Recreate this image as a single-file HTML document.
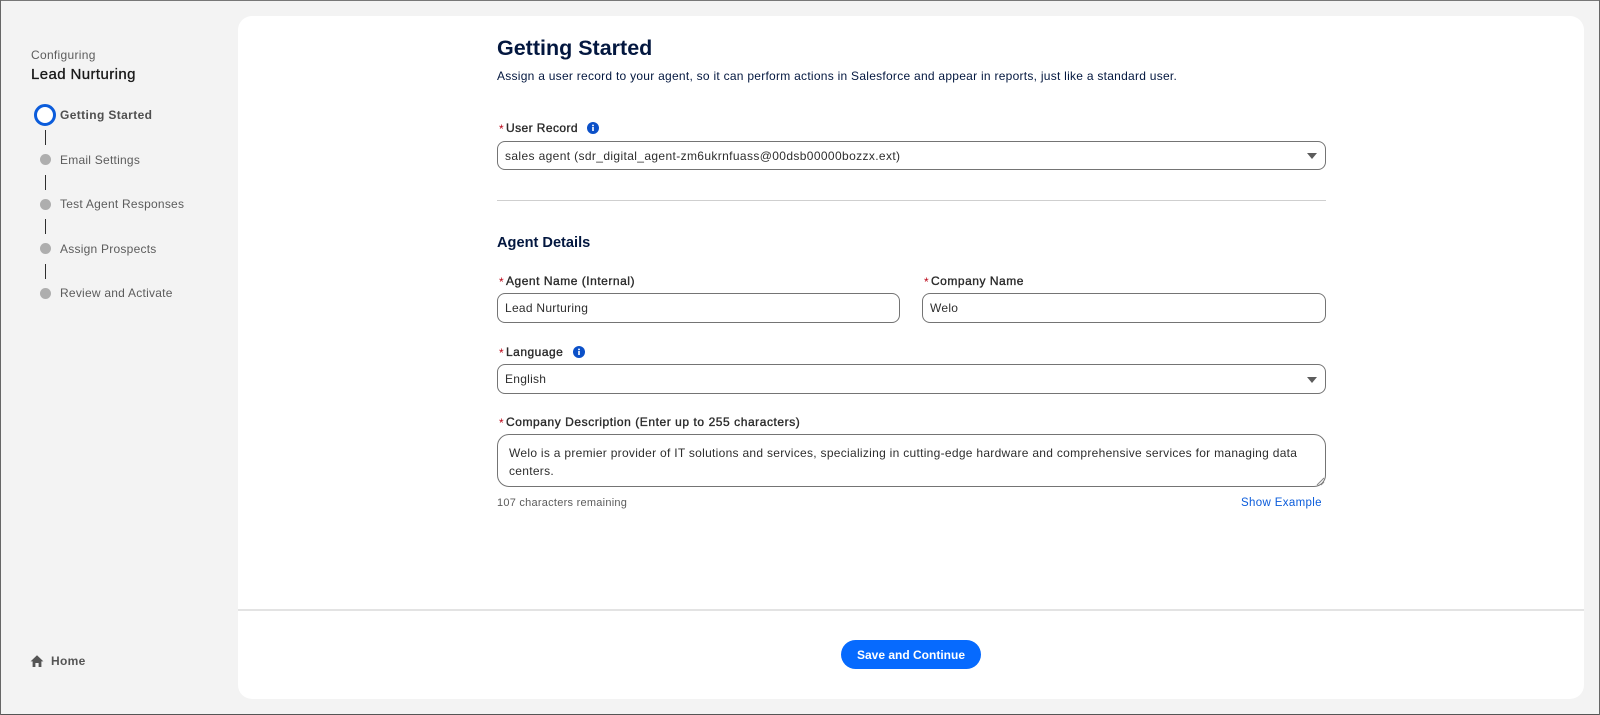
<!DOCTYPE html>
<html>
<head>
<meta charset="utf-8">
<style>
html,body{margin:0;padding:0;}
body{width:1600px;height:715px;position:relative;overflow:hidden;background:#f3f3f3;font-family:"Liberation Sans",Arial,sans-serif;}
.t{position:absolute;white-space:nowrap;line-height:16px;}
.b{position:absolute;}
.box{position:absolute;box-sizing:border-box;border:1px solid #747474;border-radius:8px;background:#fff;}
.lab{font-size:12px;color:#2a2a2a;font-weight:400;-webkit-text-stroke:.35px #2a2a2a;letter-spacing:.52px;}
.star{color:#ba0517;font-size:12px;}
.val{font-size:12px;color:#2e2e2e;letter-spacing:.27px;}
.nav{font-size:12px;color:#5c5c5c;letter-spacing:.24px;}
.dot{position:absolute;left:40px;width:11px;height:11px;border-radius:50%;background:#aeaeae;}
.ln{position:absolute;left:44.5px;width:1.5px;height:15px;background:#2e2e2e;}
.arr{position:absolute;width:0;height:0;border-left:5px solid transparent;border-right:5px solid transparent;border-top:6px solid #5c5c5c;}
</style>
</head>
<body>
<div class="b" style="left:0;top:0;width:1600px;height:1px;background:#777;"></div>
<div class="b" style="left:0;top:714px;width:1600px;height:1px;background:#555;"></div>
<div class="b" style="left:0;top:0;width:1px;height:715px;background:#666;"></div>
<div class="b" style="left:1599px;top:0;width:1px;height:715px;background:#666;"></div>

<div class="t" style="left:31px;top:47px;font-size:12px;color:#5c5c5c;letter-spacing:.3px;">Configuring</div>
<div class="t" style="left:31px;top:66px;font-size:15px;line-height:18px;color:#181818;letter-spacing:.4px;-webkit-text-stroke:.3px #181818;">Lead Nurturing</div>

<div class="b" style="left:34px;top:104px;box-sizing:border-box;width:22px;height:22px;border:3px solid #0b5cdb;border-radius:50%;background:#fff;"></div>
<div class="t nav" style="left:60px;top:107px;font-weight:700;color:#4f4f4f;letter-spacing:.38px;">Getting Started</div>
<div class="ln" style="top:130px;"></div>
<div class="dot" style="top:154px;"></div>
<div class="t nav" style="left:60px;top:152px;">Email Settings</div>
<div class="ln" style="top:175px;"></div>
<div class="dot" style="top:199px;"></div>
<div class="t nav" style="left:60px;top:196px;">Test Agent Responses</div>
<div class="ln" style="top:219px;"></div>
<div class="dot" style="top:243px;"></div>
<div class="t nav" style="left:60px;top:241px;">Assign Prospects</div>
<div class="ln" style="top:264px;"></div>
<div class="dot" style="top:288px;"></div>
<div class="t nav" style="left:60px;top:285px;">Review and Activate</div>

<svg class="b" style="left:30px;top:654px;" width="14" height="14" viewBox="0 0 14 14"><path d="M7 1.2 L13.4 7.4 H11.4 V13 H8.6 V9 H5.4 V13 H2.6 V7.4 H.6 Z" fill="#555"/></svg>
<div class="t" style="left:51px;top:653px;font-size:12px;font-weight:700;color:#555;letter-spacing:.3px;">Home</div>

<div class="b" style="left:238px;top:16px;width:1346px;height:683px;background:#fff;border-radius:14px;"></div>
<div class="b" style="left:238px;top:609px;width:1346px;height:2px;background:#e3e3e3;"></div>

<div class="t" style="left:497px;top:34px;font-size:21.5px;line-height:28px;font-weight:700;color:#03173f;">Getting Started</div>
<div class="t" style="left:497px;top:68px;font-size:12px;color:#03173f;letter-spacing:.265px;">Assign a user record to your agent, so it can perform actions in Salesforce and appear in reports, just like a standard user.</div>

<div class="t star" style="left:499px;top:121px;">*</div>
<div class="t lab" style="left:506px;top:120px;letter-spacing:.42px;">User Record</div>
<svg class="b" style="left:587px;top:122px;" width="12" height="12" viewBox="0 0 12 12"><circle cx="6" cy="6" r="6" fill="#0b50c8"/><rect x="5.2" y="5" width="1.6" height="4" fill="#fff"/><circle cx="6" cy="3.4" r=".95" fill="#fff"/></svg>
<div class="box" style="left:497px;top:141px;width:829px;height:29px;"></div>
<div class="t val" style="left:505px;top:148px;letter-spacing:.37px;">sales agent (sdr_digital_agent-zm6ukrnfuass@00dsb00000bozzx.ext)</div>
<div class="arr" style="left:1306.5px;top:153px;"></div>

<div class="b" style="left:497px;top:200px;width:829px;height:1px;background:#cfcfcf;"></div>

<div class="t" style="left:497px;top:234px;font-size:14.6px;line-height:18px;font-weight:700;color:#03173f;">Agent Details</div>

<div class="t star" style="left:499px;top:274px;">*</div>
<div class="t lab" style="left:506px;top:273px;">Agent Name (Internal)</div>
<div class="box" style="left:497px;top:293px;width:403px;height:30px;"></div>
<div class="t val" style="left:505px;top:300px;">Lead Nurturing</div>

<div class="t star" style="left:924px;top:274px;">*</div>
<div class="t lab" style="left:931px;top:273px;">Company Name</div>
<div class="box" style="left:922px;top:293px;width:404px;height:30px;"></div>
<div class="t val" style="left:930px;top:300px;">Welo</div>

<div class="t star" style="left:499px;top:345px;">*</div>
<div class="t lab" style="left:506px;top:344px;letter-spacing:.49px;">Language</div>
<svg class="b" style="left:573px;top:346px;" width="12" height="12" viewBox="0 0 12 12"><circle cx="6" cy="6" r="6" fill="#0b50c8"/><rect x="5.2" y="5" width="1.6" height="4" fill="#fff"/><circle cx="6" cy="3.4" r=".95" fill="#fff"/></svg>
<div class="box" style="left:497px;top:364px;width:829px;height:30px;"></div>
<div class="t val" style="left:505px;top:371px;">English</div>
<div class="arr" style="left:1306.5px;top:377px;"></div>

<div class="t star" style="left:499px;top:415px;">*</div>
<div class="t lab" style="left:506px;top:414px;letter-spacing:.56px;">Company Description (Enter up to 255 characters)</div>
<div class="box" style="left:497px;top:434px;width:829px;height:53px;border-radius:12px;"></div>
<div class="t val" style="left:509px;top:444px;line-height:18px;letter-spacing:.29px;">Welo is a premier provider of IT solutions and services, specializing in cutting-edge hardware and comprehensive services for managing data<br>centers.</div>
<svg class="b" style="left:1316px;top:477px;" width="9" height="9" viewBox="0 0 9 9"><path d="M1 8 L8 1 M5 8 L8 5" stroke="#888" stroke-width="1" fill="none"/></svg>

<div class="t" style="left:497px;top:495px;font-size:11px;color:#5c5c5c;letter-spacing:.25px;">107 characters remaining</div>
<div class="t" style="left:1241px;top:495px;font-size:11.5px;color:#0b5cdb;letter-spacing:.35px;">Show Example</div>

<div class="b" style="left:841px;top:640px;width:140px;height:29px;background:#066afe;border-radius:15px;"></div>
<div class="t" style="left:841px;top:647px;width:140px;text-align:center;font-size:12px;font-weight:700;color:#fff;">Save and Continue</div>
</body>
</html>
